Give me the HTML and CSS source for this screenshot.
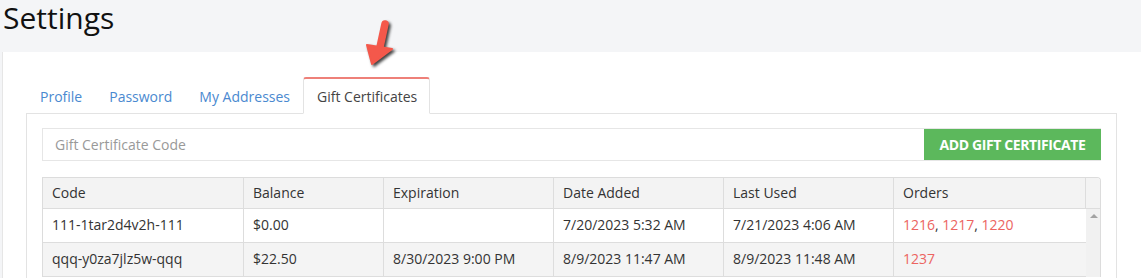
FILE: index.html
```html
<!DOCTYPE html>
<html lang="en">
<head>
    <meta charset="UTF-8">
    <meta name="viewport" content="width=device-width, initial-scale=1.0">
    <title>Settings</title>
    <link rel="stylesheet" href="styles.css">
</head>
<body>
    <h1 class="page-title">Settings</h1>

    <div class="panel">
        <svg class="pointer" width="40" height="52" viewBox="0 0 40 52">
            <line x1="27" y1="8" x2="22" y2="31" />
            <polygon points="9,29 34,33 14,48" />
        </svg>

        <ul class="tabs">
            <li><a href="#">Profile</a></li>
            <li><a href="#">Password</a></li>
            <li><a href="#">My Addresses</a></li>
            <li class="active"><a href="#">Gift Certificates</a></li>
        </ul>

        <div class="tab-content">
            <form class="add-form">
                <input type="text" placeholder="Gift Certificate Code">
                <button type="submit">Add Gift Certificate</button>
            </form>

            <div class="grid">
                <div class="grid-row grid-head">
                    <div>Code</div>
                    <div>Balance</div>
                    <div>Expiration</div>
                    <div>Date Added</div>
                    <div>Last Used</div>
                    <div>Orders</div>
                    <div class="gutter"></div>
                </div>
                <div class="grid-body">
                    <div class="rows">
                        <div class="grid-row">
                            <div>111-1tar2d4v2h-111</div>
                            <div>$0.00</div>
                            <div></div>
                            <div>7/20/2023 5:32 AM</div>
                            <div>7/21/2023 4:06 AM</div>
                            <div><a href="#">1216</a>, <a href="#">1217</a>, <a href="#">1220</a></div>
                        </div>
                        <div class="grid-row alt">
                            <div>qqq-y0za7jlz5w-qqq</div>
                            <div>$22.50</div>
                            <div>8/30/2023 9:00 PM</div>
                            <div>8/9/2023 11:47 AM</div>
                            <div>8/9/2023 11:48 AM</div>
                            <div><a href="#">1237</a></div>
                        </div>
                    </div>
                    <div class="scrollbar"><span class="up"></span></div>
                </div>
            </div>
        </div>
    </div>
</body>
</html>
```

FILE: styles.css
```css
body {
    margin: 0;
    background-color: #f4f5f7;
    font-family: "Open Sans", Arial, sans-serif;
    font-size: 14px;
    color: #333;
    height: 278px;
    overflow: hidden;
}
.page-title {
    margin: 0;
    height: 52px;
    padding-left: 3px;
    font-size: 30px;
    font-weight: 400;
    line-height: 36px;
    color: #111;
}
.panel {
    position: relative;
    margin-left: 2px;
    padding: 25px 0 0 23px;
    background-color: #fff;
    border-left: 1px solid #e6e6e6;
    width: 1116px;
    height: 201px;
}
.pointer {
    position: absolute;
    left: 355px;
    top: -36px;
    overflow: visible;
    filter: drop-shadow(2px 2px 1.5px rgba(0, 0, 0, 0.75));
}
.pointer line {
    stroke: #f4584b;
    stroke-width: 7.5;
    stroke-linecap: round;
}
.pointer polygon {
    fill: #f4584b;
    stroke: #f4584b;
    stroke-width: 2;
    stroke-linejoin: round;
}
.tabs {
    display: flex;
    margin: 0;
    padding: 0;
    list-style: none;
    width: 1091px;
    border-bottom: 1px solid #e3e3e3;
}
.tabs li {
    margin-bottom: -1px;
}
.tabs a {
    display: block;
    padding: 0 13px 0 14px;
    height: 34px;
    line-height: 36px;
    color: #4a89d0;
    text-decoration: none;
    border-top: 2px solid transparent;
}
.tabs .active a {
    color: #444;
    background-color: #fff;
    border: 1px solid #e3e3e3;
    border-top: 2px solid #ee8079;
    border-bottom: 1px solid #fff;
    border-radius: 3px 3px 0 0;
    padding: 0 12px 0 13px;
}
.tab-content {
    width: 1059px;
    padding: 14px 15px 0;
    border-left: 1px solid #e3e3e3;
    border-right: 1px solid #e3e3e3;
    height: 150px;
}
.add-form {
    display: flex;
    margin: 0 0 16px;
    border: 1px solid #e6e6e6;
    height: 31px;
}
.add-form input {
    flex: 1;
    border: 0;
    padding: 0 12px;
    font-family: inherit;
    font-size: 14px;
    color: #333;
    outline: none;
}
.add-form input::placeholder {
    color: #999;
}
.add-form button {
    width: 177px;
    border: 0;
    margin: 0 -1px 0 0;
    background-color: #5cb85c;
    color: #fff;
    font-family: inherit;
    font-size: 14px;
    font-weight: 700;
    letter-spacing: -0.4px;
    text-transform: uppercase;
}
.grid {
    border: 1px solid #dcdcdc;
    border-bottom: 0;
    border-radius: 0 4px 0 0;
    overflow: hidden;
}
.grid-row {
    display: grid;
    grid-template-columns: 201px 140px 170px 170px 170px 192px;
    height: 33px;
    border-bottom: 1px solid #ddd;
}
.grid-row > div {
    padding-left: 9px;
    line-height: 32px;
    border-right: 1px solid #ddd;
    white-space: nowrap;
}
.grid-head {
    grid-template-columns: 201px 140px 170px 170px 170px 192px 16px;
    height: 30px;
    background-color: #f3f3f3;
}
.grid-head > div {
    line-height: 30px;
}
.grid-head .gutter {
    padding: 0;
    border-right: 0;
}
.grid-body {
    display: flex;
}
.rows {
    width: 1043px;
}
.rows .grid-row > div:last-child {
    border-right: 0;
}
.alt {
    background-color: #f4f4f4;
}
.grid-row a {
    color: #ec6461;
    text-decoration: none;
}
.scrollbar {
    width: 16px;
    background-color: #f1f1f1;
    position: relative;
}
.up {
    position: absolute;
    left: 4px;
    top: 5px;
    border-left: 4px solid transparent;
    border-right: 4px solid transparent;
    border-bottom: 4px solid #a3a3a3;
}
```
